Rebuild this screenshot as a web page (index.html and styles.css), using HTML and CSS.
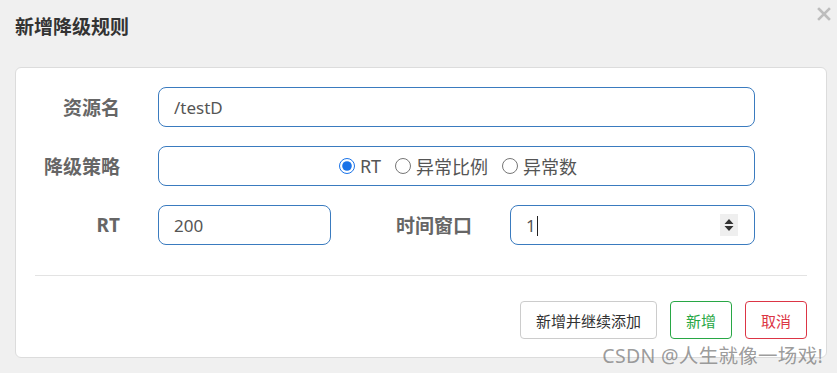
FILE: index.html
```html
<!DOCTYPE html>
<html lang="zh-CN">
<head>
  <meta charset="UTF-8">
  <meta name="viewport" content="width=device-width, initial-scale=1.0">
  <title>新增降级规则</title>
  <link rel="stylesheet" href="styles.css">
</head>
<body>
  <div class="dialog">
    <div class="dialog-header">
      <h1 class="dialog-title">新增降级规则</h1>
      <span class="dialog-close">
        <svg width="14" height="14" viewBox="0 0 14 14"><path d="M2 2 L12 12 M12 2 L2 12" stroke="#bdbdbd" stroke-width="2.6" stroke-linecap="square"/></svg>
      </span>
    </div>

    <div class="dialog-card">
      <div class="form-row">
        <label class="form-label">资源名</label>
        <div class="field field-wide">/testD</div>
      </div>

      <div class="form-row">
        <label class="form-label">降级策略</label>
        <div class="field field-wide field-radios">
          <label class="radio-item"><input type="radio" name="grade" checked> RT</label>
          <label class="radio-item"><input type="radio" name="grade"> 异常比例</label>
          <label class="radio-item"><input type="radio" name="grade"> 异常数</label>
        </div>
      </div>

      <div class="form-row">
        <label class="form-label">RT</label>
        <div class="field field-rt">200</div>
        <label class="form-label form-label-flex">时间窗口</label>
        <div class="field field-window">
          <span>1<span class="caret"></span></span>
          <span class="spinner">
            <svg width="10" height="14" viewBox="0 0 10 14"><path d="M5 1 L9.5 6 L0.5 6 Z M0.5 8 L9.5 8 L5 13 Z" fill="#333"/></svg>
          </span>
        </div>
      </div>

      <div class="divider"></div>

      <div class="actions">
        <button class="btn">新增并继续添加</button>
        <button class="btn btn-success">新增</button>
        <button class="btn btn-danger">取消</button>
      </div>
    </div>

    <div class="watermark">CSDN @人生就像一场戏!</div>
  </div>
</body>
</html>
```

FILE: styles.css
```css
* {
  margin: 0;
  padding: 0;
  box-sizing: border-box;
}

body {
  font-family: 'Noto Sans', 'Noto Sans CJK SC', sans-serif;
  background: #f0f0f0;
  color: #333;
  width: 837px;
  height: 373px;
  overflow: hidden;
}

.dialog {
  position: relative;
  height: 373px;
  padding: 0 10px 0 15px;
}

.dialog-header {
  height: 67px;
  display: flex;
  justify-content: space-between;
  align-items: flex-start;
}

.dialog-title {
  font-size: 19px;
  font-weight: 700;
  color: #333;
  margin-top: 13px;
  line-height: 28px;
}

.dialog-close {
  margin-top: 7px;
  margin-right: -4px;
  line-height: 0;
}

.dialog-card {
  width: 812px;
  background: #fff;
  border: 1px solid #dcdcdc;
  border-radius: 6px;
  padding: 19px 19px 18px 19px;
}

.form-row {
  display: flex;
  align-items: center;
  margin-bottom: 19px;
}

.form-label {
  width: 85px;
  text-align: right;
  font-size: 19px;
  font-weight: 700;
  color: #666;
  margin-right: 38px;
}

.form-label-flex {
  width: 141px;
  margin-right: 38px;
}

.field {
  height: 40px;
  border: 1px solid #3a7bbf;
  border-radius: 8px;
  padding: 0 15px;
  display: flex;
  align-items: center;
  font-size: 17px;
  color: #555;
}

.field-wide {
  width: 597px;
}

.field-radios {
  justify-content: center;
  padding-left: 18px;
  font-size: 18px;
}

.radio-item {
  display: inline-flex;
  align-items: center;
  margin-right: 14px;
}

.radio-item:last-child {
  margin-right: 0;
}

.radio-item input {
  width: 16px;
  height: 16px;
  margin-right: 5px;
  accent-color: #1a73e8;
}

.field-rt {
  width: 173px;
}

.field-window {
  width: 245px;
  justify-content: space-between;
  padding-right: 16px;
}

.caret {
  display: inline-block;
  width: 1px;
  height: 20px;
  background: #222;
  vertical-align: -4px;
  margin-left: 1px;
}

.spinner {
  width: 18px;
  height: 22px;
  background: #efefef;
  display: flex;
  align-items: center;
  justify-content: center;
}

.divider {
  height: 1px;
  background: #e3e3e3;
  margin-top: 30px;
  margin-bottom: 25px;
}

.actions {
  display: flex;
  justify-content: flex-end;
  gap: 13px;
}

.btn {
  font-family: 'Noto Sans', 'Noto Sans CJK SC', sans-serif;
  font-size: 15px;
  height: 38px;
  padding: 0 15px;
  background: #fff;
  border: 1px solid #ccc;
  border-radius: 4px;
  color: #333;
}

.btn-success {
  border-color: #28a745;
  color: #28a745;
  width: 62px;
}

.btn-danger {
  border-color: #dc3545;
  color: #dc3545;
  width: 62px;
}

.watermark {
  position: absolute;
  right: 14px;
  top: 340px;
  font-size: 19.5px;
  letter-spacing: 0.3px;
  color: rgba(130, 130, 130, 0.8);
}
```
